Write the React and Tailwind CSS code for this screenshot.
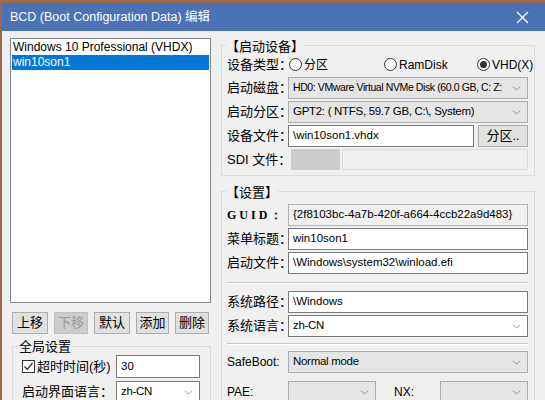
import { ChevronDown } from "lucide-react";

const font = { fontFamily: '"Liberation Sans", "Noto Sans CJK SC", sans-serif' };

// --- small Win32-ish controls ---
const Combo = ({ value, className = "", white = false, textClass = "text-[11.5px] tracking-[-0.3px]" }) => (
  <div
    className={`flex items-center justify-between min-w-0 h-[22px] border pl-[4px] pr-[4px] ${
      white ? "bg-white border-[#7a7a7a]" : "bg-[#e5e5e5] border-[#acacac]"
    } ${className}`}
  >
    <span className={`overflow-hidden whitespace-nowrap min-w-0 text-black ${textClass}`}>{value}</span>
    <ChevronDown size={13} strokeWidth={1.2} className="shrink-0 text-[#606060]" />
  </div>
);

const Field = ({ value, className = "", readOnly = false }) => (
  <div
    className={`flex items-center min-w-0 overflow-hidden whitespace-nowrap h-[22px] border pl-[4px] text-[11.5px] text-black ${
      readOnly ? "bg-[#f0f0f0] border-[#b4b4b4]" : "bg-white border-[#7a7a7a]"
    } ${className}`}
  >
    {value}
  </div>
);

const Btn = ({ children, disabled = false, className = "" }) => (
  <div
    className={`flex items-center justify-center shrink-0 h-[22px] border text-[13px] ${
      disabled
        ? "bg-[#cccccc] border-[#bfbfbf] text-[#9a9a9a]"
        : "bg-[#e1e1e1] border-[#adadad] text-black"
    } ${className}`}
  >
    {children}
  </div>
);

const Row = ({ label, children, bold = false }) => (
  <div className="flex items-center">
    <span
      className={`w-[61px] shrink-0 whitespace-nowrap text-black ${
        bold ? "text-[12px] font-bold tracking-[3px]" : "text-[13px]"
      }`}
      style={bold ? { fontFamily: '"Liberation Serif", serif' } : undefined}
    >
      {label}
    </span>
    <div className="flex-1 min-w-0 flex">{children}</div>
  </div>
);

const Radio = ({ label, checked = false, className = "" }) => (
  <div className={`flex items-center gap-[2px] ${className}`}>
    <span className="w-[13px] h-[13px] rounded-full border border-[#333] bg-white flex items-center justify-center">
      {checked && <span className="w-[7px] h-[7px] rounded-full bg-[#333]" />}
    </span>
    <span className="text-[12px] text-black">{label}</span>
  </div>
);

export default function App() {
  return (
    <div className="w-[545px] h-[400px] overflow-hidden bg-[#9b6b4c] pt-[3px] pl-[2px]" style={font}>
      {/* title bar */}
      <div className="h-[28px] bg-[#4a72b6] flex items-center justify-between pl-[8px] pr-[16px]">
        <span className="text-[12.5px] text-white">BCD (Boot Configuration Data) 编辑</span>
        <svg width="13" height="13" viewBox="0 0 13 13" className="text-white">
          <path d="M1 1 L12 12 M12 1 L1 12" stroke="currentColor" strokeWidth="1.3" />
        </svg>
      </div>

      <div className="h-[369px] overflow-hidden bg-[#f0f0f0] flex pt-[7px] pl-[8px]">
        {/* left column */}
        <div className="w-[201px] shrink-0 flex flex-col">
          <div className="h-[265px] shrink-0 bg-white border border-[#828790] p-[1px] text-[12px]">
            <div className="h-[15px] leading-[15px] pl-[1px]">Windows 10 Professional (VHDX)</div>
            <div className="h-[15px] leading-[15px] pl-[1px] bg-[#0078d7] text-white">win10son1</div>
          </div>

          <div className="flex justify-between shrink-0 mt-[9px] px-[2px]">
            <Btn className="w-[36px]">上移</Btn>
            <Btn className="w-[34px]" disabled>下移</Btn>
            <Btn className="w-[36px]">默认</Btn>
            <Btn className="w-[33px]">添加</Btn>
            <Btn className="w-[34px]">删除</Btn>
          </div>

          <div className="relative shrink-0 mt-[12px] ml-[2px] border border-[#dcdcdc] h-[60px] pt-[8px] pl-[9px]">
            <span className="absolute -top-[10px] left-[5px] bg-[#f0f0f0] px-[1px] text-[13px]">全局设置</span>
            <div className="flex items-center">
              <span className="w-[13px] h-[13px] border border-[#333] bg-white flex items-center justify-center">
                <svg width="11" height="11" viewBox="0 0 11 11">
                  <path d="M1.5 5.5 L4.3 8.3 L9.5 2" stroke="#222" strokeWidth="1.2" fill="none" />
                </svg>
              </span>
              <span className="ml-[2px] text-[13px] w-[79px]">超时时间(秒)</span>
              <Field value="30" className="w-[84px] h-[23px]" />
            </div>
            <div className="flex items-center mt-[3px]">
              <span className="text-[13px] w-[94px]">启动界面语言：</span>
              <Combo value="zh-CN" white className="w-[84px]" />
            </div>
          </div>
        </div>

        {/* right column */}
        <div className="flex-1 min-w-0 flex flex-col pl-[10px] pr-[10px] pt-[7px]">
          <div className="relative border border-[#dcdcdc] pt-[8px] pl-[5px] pr-[6px] pb-[5px] flex flex-col gap-[2px]">
            <span className="absolute -top-[9px] left-[4px] bg-[#f0f0f0] text-[13px]">【启动设备】</span>
            <Row label="设备类型：">
              <div className="flex items-center h-[21px]">
                <Radio label="分区" className="w-[96px] pl-[1px]" />
                <Radio label="RamDisk" className="w-[93px]" />
                <Radio label="VHD(X)" checked />
              </div>
            </Row>
            <Row label="启动磁盘：">
              <Combo
                value="HD0: VMware Virtual NVMe Disk (60.0 GB, C: Z:"
                className="flex-1"
                textClass="text-[10.5px] tracking-[-0.4px]"
              />
            </Row>
            <Row label="启动分区：">
              <Combo value="GPT2: ( NTFS,  59.7 GB, C:\, System)" className="flex-1" />
            </Row>
            <Row label="设备文件：">
              <Field value="\win10son1.vhdx" className="flex-1" />
              <Btn className="w-[50px] ml-[4px]">分区..</Btn>
            </Row>
            <Row label="SDI 文件：">
              <div className="flex flex-1 h-[21px] pl-[3px] gap-[2px]">
                <div className="w-[49px] bg-[#cccccc]" />
                <div className="flex-1 bg-[#f0f0f0] border border-[#d9d9d9]" />
              </div>
            </Row>
          </div>

          <div className="relative mt-[15px] border border-[#dcdcdc] pt-[12px] pl-[5px] pr-[6px] flex-1 flex flex-col gap-[2px]">
            <span className="absolute -top-[9px] left-[4px] bg-[#f0f0f0] text-[13px]">【设置】</span>
            <Row label="GUID：" bold>
              <Field value="{2f8103bc-4a7b-420f-a664-4ccb22a9d483}" readOnly className="flex-1" />
            </Row>
            <Row label="菜单标题：">
              <Field value="win10son1" className="flex-1" />
            </Row>
            <Row label="启动文件：">
              <Field value="\Windows\system32\winload.efi" className="flex-1" />
            </Row>
            <div className="h-[2px] border-t border-[#c8c8c8] border-b border-b-white mt-[6px] mb-[5px]" />
            <Row label="系统路径：">
              <Field value="\Windows" className="flex-1" />
            </Row>
            <Row label="系统语言：">
              <Combo value="zh-CN" white className="flex-1" />
            </Row>
            <div className="h-[2px] border-t border-[#c8c8c8] border-b border-b-white my-[4px]" />
            <div className="flex items-center">
              <span className="w-[61px] text-[12px]">SafeBoot:</span>
              <Combo value="Normal mode" className="flex-1" />
            </div>
            <div className="flex items-center mt-[6px]">
              <span className="w-[61px] text-[12px]">PAE:</span>
              <Combo value="" className="w-[88px]" />
              <span className="w-[64px] shrink-0 text-[12px] pl-[18px]">NX:</span>
              <Combo value="" className="flex-1" />
            </div>
          </div>
        </div>
      </div>
    </div>
  );
}
